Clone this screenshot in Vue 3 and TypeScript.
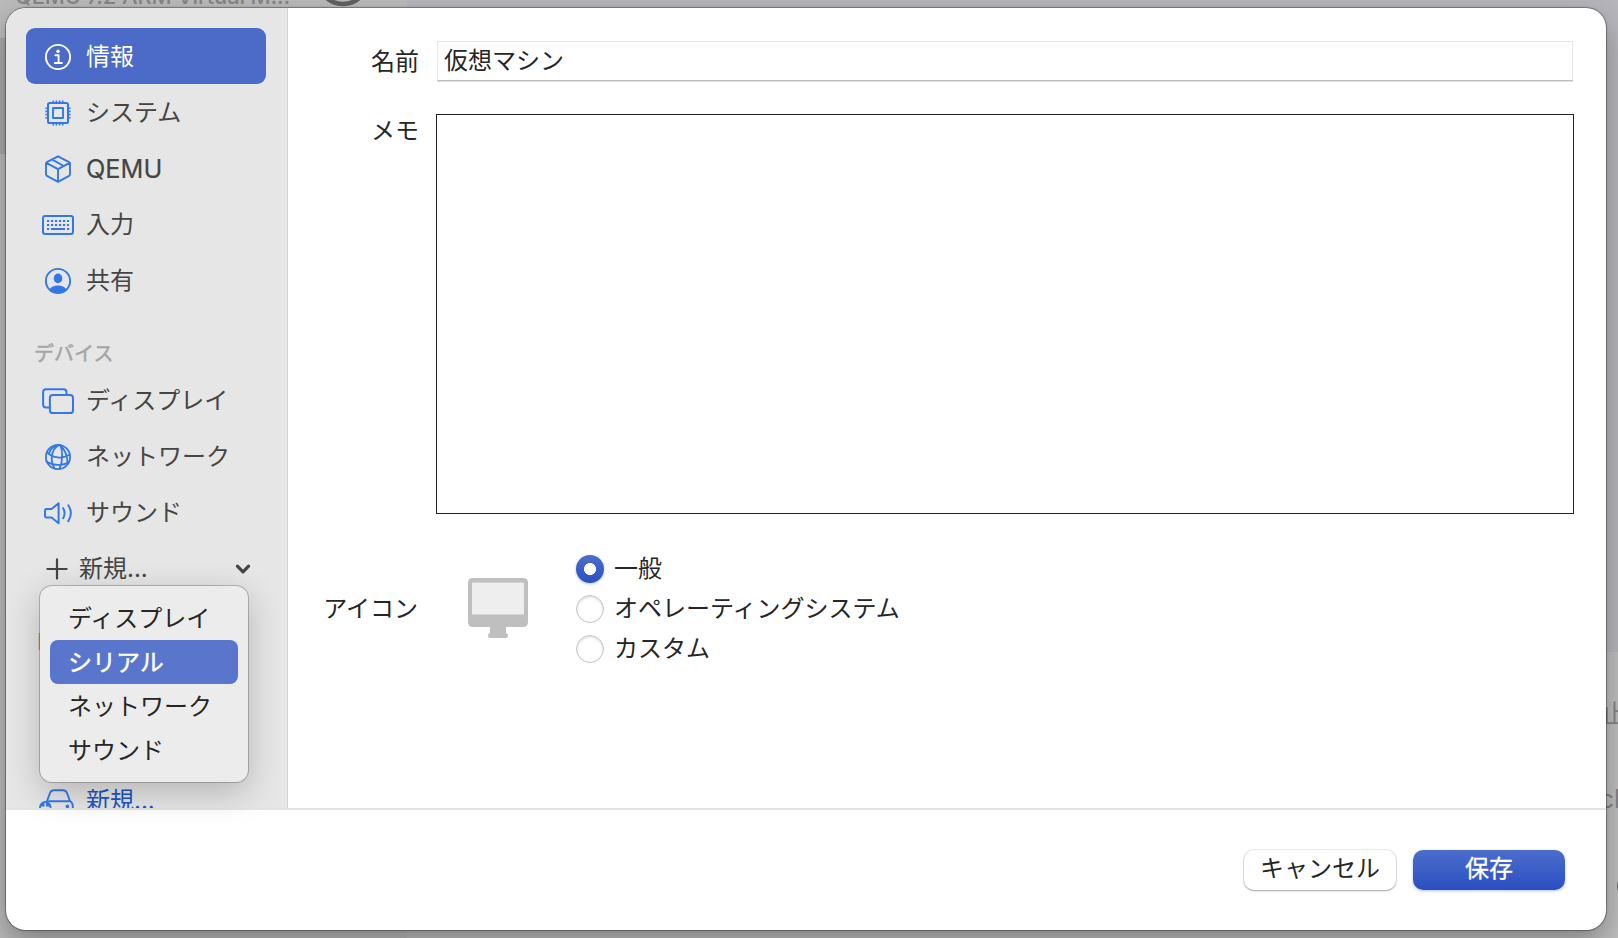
<script setup lang="ts">
import { ref } from 'vue'

interface NavItem {
  label: string
  icon: string
}

const general: NavItem[] = [
  { label: '情報', icon: 'info' },
  { label: 'システム', icon: 'cpu' },
  { label: 'QEMU', icon: 'box' },
  { label: '入力', icon: 'keyboard' },
  { label: '共有', icon: 'person' },
]
const devices: NavItem[] = [
  { label: 'ディスプレイ', icon: 'display' },
  { label: 'ネットワーク', icon: 'globe' },
  { label: 'サウンド', icon: 'speaker' },
]
const menuItems: string[] = ['ディスプレイ', 'シリアル', 'ネットワーク', 'サウンド']
const iconStyles: string[] = ['一般', 'オペレーティングシステム', 'カスタム']

const selected = ref('情報')
const hovered = ref('シリアル')
const iconStyle = ref('一般')
const vmName = ref('仮想マシン')
const notes = ref('')
</script>

<template>
  <div class="screen">
    <div class="backdrop">
      <div class="back-list">
        <div class="back-head">
          <span class="back-title">QEMU 7.2 ARM Virtual M...</span>
          <svg class="back-ring" width="64" height="64" viewBox="0 0 64 64"><circle cx="32" cy="32" r="25" fill="none" stroke="#606060" stroke-width="4.5" /></svg>
        </div>
        <div class="back-selected"></div>
      </div>
      <div class="back-detail">
        <div class="back-preview"></div>
        <div class="back-info">
          <span class="peek peek-stop">止</span>
          <span class="peek peek-arch">cl</span>
          <span class="peek peek-dot"></span>
        </div>
      </div>
    </div>

    <div class="window">
      <div class="body">
        <nav class="sidebar">
          <div
            v-for="item in general"
            :key="item.label"
            class="row"
            :class="{ active: item.label === selected }"
            @click="selected = item.label"
          >
            <svg class="icon" width="34" height="32" viewBox="0 0 34 32">
              <g v-if="item.icon === 'info'">
                <circle cx="17" cy="16" r="12.1" stroke-width="1.9" />
                <circle cx="17" cy="10.2" r="1.7" class="solid" />
                <path d="M14.3 14.2H17.6V21.8M13.8 22H20.9" stroke-width="1.9" />
              </g>
              <g v-else-if="item.icon === 'cpu'" stroke-linecap="butt">
                <rect x="7" y="6" width="20" height="20" rx="1.6" stroke-width="2" />
                <rect x="12" y="11" width="10" height="10" stroke-width="1.9" />
                <path class="pins" d="M12.3 3.4V6M15.4 3.4V6M18.6 3.4V6M21.7 3.4V6M12.3 26v2.6M15.4 26v2.6M18.6 26v2.6M21.7 26v2.6M4.4 11.3H7M4.4 14.4H7M4.4 17.6H7M4.4 20.7H7M27 11.3h2.6M27 14.4h2.6M27 17.6h2.6M27 20.7h2.6" stroke-width="1.6" />
              </g>
              <g v-else-if="item.icon === 'box'">
                <path d="M17 3.3L28.1 9.2Q29 9.7 29 10.7V21.3Q29 22.3 28.1 22.8L17 28.8L5.9 22.8Q5 22.3 5 21.3V10.7Q5 9.7 5.9 9.2ZM5.4 9.9L17 16.2L28.6 9.9M17 16.2V28.5M11.2 6.6L22.8 13" stroke-width="1.9" />
              </g>
              <g v-else-if="item.icon === 'keyboard'">
                <rect x="2" y="7" width="30" height="18" rx="2.2" stroke-width="2" />
                <path d="M6 12h22M6 16h22" stroke-width="2.2" stroke-dasharray="2.2 1.8" stroke-linecap="butt" />
                <path d="M6 20h2.2M10 20h14M26 20h2.2" stroke-width="2.1" stroke-linecap="butt" />
              </g>
              <g v-else>
                <circle cx="17" cy="16" r="12.1" stroke-width="1.9" />
                <ellipse cx="17" cy="13.4" rx="4.3" ry="4.9" class="solid" />
                <path d="M8.5 24.6C10 21.7 13.3 20.5 17 20.5s7 1.2 8.5 4.1C23.3 27.2 20.2 28.3 17 28.3s-6.3-1.1-8.5-3.7z" class="solid" />
              </g>
            </svg>
            <span class="row-text" :class="{ latin: item.label === 'QEMU' }">{{ item.label }}</span>
          </div>

          <div class="section">デバイス</div>

          <div v-for="item in devices" :key="item.label" class="row">
            <svg class="icon" width="34" height="32" viewBox="0 0 34 32">
              <g v-if="item.icon === 'display'" stroke-width="2">
                <path d="M8.3 22.4H5Q2.1 22.4 2.1 19.5V7.1Q2.1 4.2 5 4.2H22.6Q25.5 4.2 25.5 7.1V9.6" />
                <rect x="8.9" y="10.1" width="23.1" height="18" rx="2.9" />
              </g>
              <g v-else-if="item.icon === 'globe'" stroke-width="1.8">
                <circle cx="17" cy="16" r="12.1" />
                <path d="M18.6 4C9.5 8 9 20 13.6 27.6M19.5 4.3C21.8 10 22 21 18.4 27.9M16.8 4.2C12 5.6 9.3 8 8.2 12.3M19.5 4.3C24.5 9 26.3 14.5 26.6 22M6 11.4C12 17.5 21 18 28.8 13.8M5.4 20.4C11.5 24.6 21.5 25 27.8 21.4" />
              </g>
              <g v-else stroke-width="2">
                <path d="M17.6 6.2V26.2L10.5 20.4H5.4Q4 20.4 4 19V13.4Q4 12 5.4 12H10.5Z" />
                <path d="M22.2 11.2Q25 16.2 22.2 21.2M27.3 8.3Q32.4 16.2 27.3 24.1" />
              </g>
            </svg>
            <span class="row-text">{{ item.label }}</span>
          </div>

          <div class="row new-device">
            <svg class="plus" width="22" height="22" viewBox="0 0 22 22"><path d="M11 1.4V20.6M1.4 11H20.6" /></svg>
            <span class="row-text">新規...</span>
            <svg class="chevron" width="16" height="12" viewBox="0 0 16 12"><path d="M2.4 3.2L8 8.8L13.6 3.2" /></svg>
          </div>

          <div class="section drives">ドライブ</div>

          <div class="row new-drive">
            <svg class="icon" width="38" height="32" viewBox="0 0 38 32">
              <path d="M11 16L14 8Q15 5.2 18 5.2H27Q30 5.2 31 8L34 16M13 16.3H33M34 16Q36.8 17.8 36.8 21V28" stroke-width="1.9" />
              <circle cx="31.4" cy="21.4" r="1.8" class="solid" />
              <circle cx="9.3" cy="22.3" r="6.2" class="solid" />
              <path d="M9.3 18.5V26M5.6 22.3H13" class="badge-plus" />
            </svg>
            <span class="row-text">新規...</span>
          </div>
        </nav>

        <main class="form">
          <div class="field name-field">
            <label class="label" for="vm-name">名前</label>
            <input id="vm-name" v-model="vmName" class="name-input" type="text" />
          </div>
          <div class="field notes-field">
            <label class="label" for="vm-notes">メモ</label>
            <textarea id="vm-notes" v-model="notes" class="notes"></textarea>
          </div>
          <div class="field icon-field">
            <span class="label">アイコン</span>
            <svg class="monitor" width="60" height="60" viewBox="0 0 60 60">
              <path d="M5 0H55Q60 0 60 5V44Q60 49 55 49H38V55Q40 55.4 40 57.5Q40 60 37.5 60H22.5Q20 60 20 57.5Q20 55.4 22 55V49H5Q0 49 0 44V5Q0 0 5 0Z" fill="#bfbfbf" />
              <rect x="4" y="4.5" width="52" height="32" rx="1" fill="#eee" />
            </svg>
            <div class="radios">
              <div v-for="option in iconStyles" :key="option" class="radio" @click="iconStyle = option">
                <span class="knob" :class="{ on: option === iconStyle }"></span>
                <span>{{ option }}</span>
              </div>
            </div>
          </div>
        </main>
      </div>

      <footer class="footer">
        <button class="button">キャンセル</button>
        <button class="button primary">保存</button>
      </footer>

      <div class="menu">
        <div
          v-for="item in menuItems"
          :key="item"
          class="menu-item"
          :class="{ hovered: item === hovered }"
          @mouseenter="hovered = item"
        >{{ item }}</div>
      </div>
    </div>
  </div>
</template>

<style>
body {
  margin: 0;
  overflow: hidden;
}
</style>

<style scoped>
.screen {
  position: relative;
  box-sizing: border-box;
  width: 1618px;
  height: 938px;
  padding: 8px 12px 8px 6px;
  overflow: hidden;
  font-family: Inter, "Noto Sans CJK JP", sans-serif;
  font-size: 24px;
  line-height: 40px;
  color: #262626;
}
.backdrop {
  position: absolute;
  inset: 0;
  display: flex;
}
.back-list {
  width: 407px;
  background: #bababa;
}
.back-head {
  position: relative;
  height: 38px;
  overflow: hidden;
}
.back-title {
  position: absolute;
  left: 15px;
  top: -24px;
  font-size: 22px;
  font-weight: 500;
  letter-spacing: -0.15px;
  white-space: nowrap;
  color: #858585;
}
.back-ring {
  position: absolute;
  left: 311px;
  top: -53px;
}
.back-selected {
  height: 116px;
  background: #a9a9a9;
}
.back-detail {
  flex: 1;
  display: flex;
  flex-direction: column;
}
.back-preview {
  height: 652px;
  background: #b5b5bb;
}
.back-info {
  position: relative;
  flex: 1;
  background: #bebebe;
}
.peek {
  position: absolute;
  font-size: 25px;
  color: #858585;
}
.peek-stop {
  right: -8px;
  top: 42px;
}
.peek-arch {
  right: -2px;
  top: 127px;
}
.peek-dot {
  right: -7px;
  top: 226px;
  width: 8px;
  height: 16px;
  border-radius: 50%;
  background: #6b6b6b;
}
.window {
  position: relative;
  display: flex;
  flex-direction: column;
  height: 922px;
  border-radius: 20px;
  background: #fff;
  box-shadow: 0 0 0 1px rgba(0, 0, 0, 0.25), 0 0 3px rgba(0, 0, 0, 0.25), 0 14px 30px rgba(0, 0, 0, 0.3);
}
.body {
  display: flex;
  height: 800px;
  border-bottom: 2px solid #e4e4e4;
}
.sidebar {
  box-sizing: border-box;
  width: 282px;
  height: 800px;
  padding: 20px 21px 0 20px;
  overflow: hidden;
  border-right: 1px solid #d4d4d4;
  border-top-left-radius: 20px;
  background: #e6e6e6;
}
.row {
  box-sizing: border-box;
  display: flex;
  align-items: center;
  height: 56px;
  padding: 2px 15px 0 15px;
  color: #454545;
}
.latin {
  font-size: 25.3px;
  -webkit-text-stroke: 0.2px #454545;
}
.icon {
  margin-right: 11px;
  fill: none;
  stroke: #3478e6;
  stroke-linecap: round;
  stroke-linejoin: round;
}
.icon .solid {
  fill: #3478e6;
  stroke: none;
}
.icon .pins {
  stroke-linecap: butt;
}
.icon .badge-plus {
  stroke: #e2e2e2;
  stroke-width: 1.6;
}
.active {
  border-radius: 9px;
  background: #4c6ac8;
  color: #fff;
}
.active .icon {
  stroke: #fff;
}
.active .icon .solid {
  fill: #fff;
}
.section {
  box-sizing: border-box;
  height: 64px;
  padding: 26px 0 0 8px;
  font-size: 20px;
  color: #a5a5a5;
  -webkit-text-stroke: 0.5px #a5a5a5;
}
.drives {
  padding-left: 7px;
}
.new-device {
  padding-left: 20px;
}
.new-device .row-text {
  flex: 1;
}
.plus {
  margin-right: 11px;
  fill: none;
  stroke: #454545;
  stroke-width: 2.2;
  stroke-linecap: round;
}
.chevron {
  fill: none;
  stroke: #454545;
  stroke-width: 3.2;
  stroke-linecap: round;
  stroke-linejoin: round;
}
.new-drive {
  margin-top: 112px;
  padding-left: 10px;
  color: #1f56c4;
}
.new-drive .icon {
  margin-right: 12px;
}
.form {
  flex: 1;
  padding: 33px 32px 0 28px;
}
.field {
  display: flex;
}
.label {
  width: 103px;
  text-align: right;
  white-space: nowrap;
}
.name-field {
  height: 40px;
}
.name-field .label {
  padding-top: 1px;
}
.name-input {
  box-sizing: border-box;
  flex: 1;
  height: 40px;
  margin: 0 1px 0 18px;
  padding: 0 0 0 6px;
  border: 1px solid #e6e6e6;
  border-bottom: 1px solid #bdbdbd;
  box-shadow: 0 1px 0 #dedede;
  outline: none;
  background: #fff;
  font: inherit;
  color: inherit;
}
.notes-field {
  margin-top: 33px;
}
.notes-field .label {
  margin-top: -3px;
}
.notes {
  box-sizing: border-box;
  flex: 1;
  height: 400px;
  margin: 0 0 0 17px;
  padding: 6px;
  border: 1px solid #222;
  border-radius: 0;
  outline: none;
  resize: none;
  background: #fff;
  font: inherit;
}
.icon-field {
  align-items: center;
  margin-top: 35px;
}
.icon-field .label {
  width: 102px;
}
.monitor {
  margin: -2px 48px 0 50px;
}
.radio {
  display: flex;
  align-items: center;
  gap: 10px;
  height: 40px;
}
.knob {
  box-sizing: border-box;
  width: 28px;
  height: 28px;
  border: 1px solid #c6c6c6;
  border-radius: 50%;
  background: #fff;
  box-shadow: inset 0 1px 3px rgba(0, 0, 0, 0.18);
}
.knob.on {
  border: 0;
  background: radial-gradient(circle, #fff 5.7px, transparent 6.3px), linear-gradient(#4b6dcb, #2a50c2);
  box-shadow: 0 1px 3px rgba(42, 80, 194, 0.35);
}
.footer {
  display: flex;
  justify-content: flex-end;
  gap: 17px;
  padding: 40px 41px 0 0;
}
.button {
  width: 152px;
  height: 40px;
  padding: 0 0 2px;
  border: 0;
  border-radius: 10px;
  background: #fff;
  box-shadow: 0 0 0 1px rgba(0, 0, 0, 0.07), 0 1px 2px rgba(0, 0, 0, 0.3);
  font: inherit;
  line-height: 38px;
  color: #262626;
}
.primary {
  background: linear-gradient(#4b6dcb, #2a4fc1);
  box-shadow: 0 1px 3px rgba(42, 80, 194, 0.35);
  color: #fff;
  -webkit-text-stroke: 0.3px #fff;
}
.menu {
  position: absolute;
  left: 34px;
  top: 578px;
  box-sizing: border-box;
  width: 208px;
  height: 196px;
  padding: 10px;
  border-radius: 12px;
  background: #ececec;
  box-shadow: 0 0 0 1px rgba(0, 0, 0, 0.22), 0 10px 34px rgba(0, 0, 0, 0.22);
}
.menu-item {
  box-sizing: border-box;
  height: 44px;
  padding: 1px 0 0 18px;
  border-radius: 8px;
  line-height: 44px;
}
.hovered {
  background: #5a76cc;
  color: #fff;
  -webkit-text-stroke: 0.4px #fff;
}
</style>
